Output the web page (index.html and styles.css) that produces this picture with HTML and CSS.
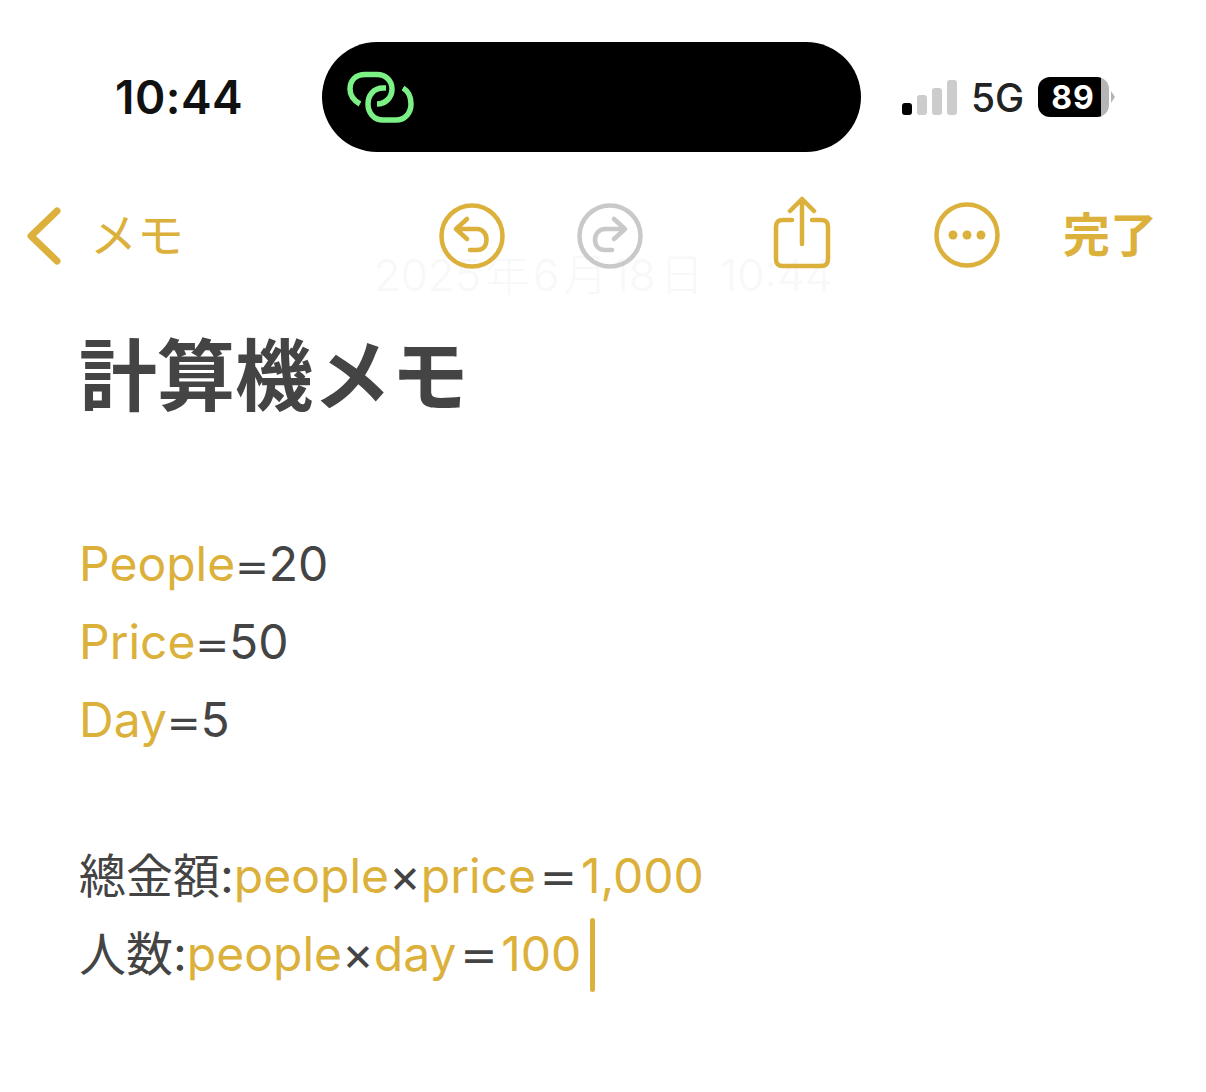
FILE: index.html
```html
<!DOCTYPE html>
<html lang="ja">
<head>
    <meta charset="UTF-8">
    <meta name="viewport" content="width=device-width, initial-scale=1.0">
    <title>計算機メモ</title>
    <link rel="stylesheet" href="styles.css">
</head>
<body>
    <div id="app">
        <div class="status-bar">
            <div class="time">10:44</div>
            <div class="island">
                <svg class="island-icon" width="70" height="56" viewBox="0 0 70 56" fill="none" stroke="#7cf286" stroke-width="5.5" stroke-linecap="butt">
                    <path d="M14 33C7 29 4 24 4 18C4 9 10 3.5 19 3.5H31C40 3.5 46 10 46 18C46 26 40 33 31 33"/>
                    <path d="M57 17C62 20 65 26 65 33C65 42 59 49 50 49H37C28 49 22 42 22 33C22 24 28 17 37 17H40"/>
                </svg>
            </div>
            <div class="status-right">
                <div class="signal">
                    <span class="bar bar-on"></span>
                    <span class="bar bar-2"></span>
                    <span class="bar bar-3"></span>
                    <span class="bar bar-4"></span>
                </div>
                <div class="network">5G</div>
                <div class="battery">
                    <div class="battery-body">
                        <span class="battery-num">89</span>
                    </div>
                    <span class="battery-tip"></span>
                </div>
            </div>
        </div>

        <div class="toolbar">
            <div class="back">
                <svg width="36" height="60" viewBox="0 0 36 60" fill="none" stroke="#dbb13b" stroke-width="7" stroke-linecap="round" stroke-linejoin="round">
                    <path d="M31 5L5 30L31 55"/>
                </svg>
                <span class="back-label">メモ</span>
            </div>
            <svg class="tool-undo" width="66" height="66" viewBox="0 0 66 66" fill="none" stroke="#dbb13b" stroke-width="4.5" stroke-linecap="round" stroke-linejoin="round">
                <circle cx="33" cy="33" r="30.5"/>
                <path d="M28 16L17 26L28 36M17 26H38C44 26 47.5 31 47.5 36.5C47.5 43 44 47 38 47H31"/>
            </svg>
            <svg class="tool-redo" width="66" height="66" viewBox="0 0 66 66" fill="none" stroke="#c9c9c9" stroke-width="4.5" stroke-linecap="round" stroke-linejoin="round">
                <circle cx="33" cy="33" r="30.5"/>
                <path d="M37 16L48 26L37 36M48 26H28C22 26 18 31 18 36.5C18 43 22 47 28 47H35"/>
            </svg>
            <svg class="tool-share" width="58" height="74" viewBox="0 0 58 74" fill="none" stroke="#dbb13b" stroke-width="4.5" stroke-linecap="round" stroke-linejoin="round">
                <path d="M19 24H10C5 24 3 26 3 31V63C3 68 5 70 10 70H48C53 70 55 68 55 63V31C55 26 53 24 48 24H39"/>
                <path d="M29 48V3M17 15L29 3L41 15"/>
            </svg>
            <svg class="tool-more" width="66" height="66" viewBox="0 0 66 66" fill="none" stroke="#dbb13b" stroke-width="4.5">
                <circle cx="33" cy="33" r="30.5"/>
                <circle cx="19" cy="33" r="4.5" fill="#dbb13b" stroke="none"/>
                <circle cx="33" cy="33" r="4.5" fill="#dbb13b" stroke="none"/>
                <circle cx="47" cy="33" r="4.5" fill="#dbb13b" stroke="none"/>
            </svg>
            <div class="done">完了</div>
        </div>

        <div class="date">2025<span class="date-unit">年</span>6<span class="date-unit">月</span>18<span class="date-unit">日</span> 10:44</div>

        <div class="note">
            <h1 class="title">計算機メモ</h1>
            <div class="line"><span class="var">People</span><span class="eq">=</span>20</div>
            <div class="line"><span class="var">Price</span><span class="eq">=</span>50</div>
            <div class="line"><span class="var">Day</span><span class="eq">=</span>5</div>
            <div class="line"></div>
            <div class="line"><span class="cjk">總金額</span>:<span class="var">people</span>×<span class="var">price</span><span class="eq eq-wide">=</span><span class="var">1,000</span></div>
            <div class="line"><span class="cjk">人数</span>:<span class="var">people</span>×<span class="var">day</span><span class="eq eq-wide">=</span><span class="var">100</span><span class="cursor"></span></div>
        </div>
    </div>
</body>
</html>
```

FILE: styles.css
```css
body {
    margin: 0;
    background-color: #fff;
    font-family: Inter, "Noto Sans CJK JP", sans-serif;
    color: #444;
}
#app {
    width: 1206px;
    height: 1092px;
    overflow: hidden;
}
.status-bar {
    display: flex;
    align-items: center;
    height: 110px;
    padding: 42px 0 0 115px;
}
.time {
    width: 207px;
    font-size: 46px;
    font-weight: 600;
    color: #111;
    letter-spacing: 0.5px;
}
.island {
    display: flex;
    align-items: center;
    width: 539px;
    height: 110px;
    padding-left: 24px;
    box-sizing: border-box;
    background-color: #000;
    border-radius: 55px;
}
.island-icon {
    margin-top: 4px;
}
.status-right {
    display: flex;
    align-items: center;
    margin-left: 41px;
}
.signal {
    display: flex;
    align-items: flex-end;
    gap: 5px;
    height: 36px;
}
.bar {
    width: 10px;
    border-radius: 3px;
    background-color: #ccc;
}
.bar-on {
    height: 12px;
    background-color: #000;
}
.bar-2 { height: 20px; }
.bar-3 { height: 27px; }
.bar-4 { height: 35px; }
.network {
    margin-left: 14px;
    font-size: 39px;
    font-weight: 500;
    color: #222;
}
.battery {
    display: flex;
    align-items: center;
    margin-left: 14px;
}
.battery-body {
    width: 71px;
    height: 40px;
    border-radius: 12px;
    background: linear-gradient(to right, #000 89%, #b5b5b5 89%);
    display: flex;
    align-items: center;
    padding-left: 13px;
    box-sizing: border-box;
}
.battery-num {
    font-size: 32px;
    font-weight: 700;
    color: #fff;
    letter-spacing: 1px;
}
.battery-tip {
    width: 0;
    height: 0;
    margin-left: 2px;
    border-left: 4px solid #b5b5b5;
    border-top: 6px solid transparent;
    border-bottom: 6px solid transparent;
}
/* the date slides under the toolbar, as it does while the note scrolls */
.toolbar {
    position: relative;
    z-index: 1;
    display: flex;
    align-items: center;
    height: 80px;
    margin-top: 44px;
    padding-left: 26px;
}
.back {
    display: flex;
    align-items: center;
    width: 413px;
}
.back-label {
    margin-left: 28px;
    margin-top: -10px;
    font-size: 47px;
    font-weight: 400;
    color: #dbb13b;
}
.tool-redo {
    margin-left: 72px;
}
.tool-share {
    margin-left: 130px;
    margin-top: -6px;
}
.tool-more {
    margin-left: 103px;
    margin-top: -2px;
}
.done {
    margin-left: 63px;
    margin-top: -10px;
    font-size: 47px;
    font-weight: 700;
    color: #dbb13b;
}
.date {
    height: 44px;
    margin-top: -23px;
    text-align: center;
    font-size: 44px;
    line-height: 44px;
    font-weight: 300;
    color: #f8f8f8;
}
.date-unit {
    margin: 0 4px;
}
.note {
    padding: 0 0 0 79px;
}
.title {
    margin: 30px 0 98px 0;
    font-size: 78px;
    font-weight: 700;
    line-height: 100px;
    color: #444;
}
.line {
    height: 78px;
    font-size: 48px;
    line-height: 78px;
    white-space: nowrap;
}
.cjk {
    font-size: 47px;
}
.var {
    color: #dbb13b;
}
.eq {
    font-family: "DejaVu Sans", sans-serif;
    font-size: 40px;
}
.eq-wide {
    margin: 0 4px;
    font-size: 44px;
}
.cursor {
    display: inline-block;
    width: 5px;
    height: 74px;
    margin-left: 9px;
    vertical-align: -21px;
    border-radius: 3px;
    background-color: #dbb13b;
}
```
